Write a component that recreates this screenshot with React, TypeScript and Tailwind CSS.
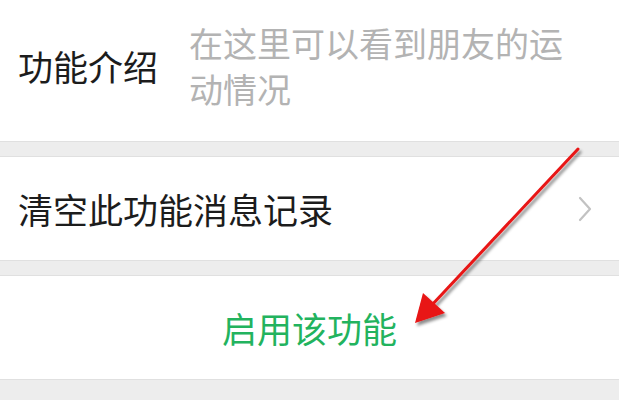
import React from "react";

const font = { fontFamily: '"Noto Sans CJK SC", "Noto Sans", sans-serif' };

export default function App() {
  return (
    <div className="relative w-[619px] h-[400px] overflow-hidden bg-[#ededed]" style={font}>
      <div className="flex h-[142px] items-center bg-white pb-[10px] border-b border-[#e0e0e0]">
        <div className="ml-[18px] w-[171px] text-[35px] leading-[46px] text-[#1c1c1c]">功能介绍</div>
        <div className="w-[390px] text-[34px] leading-[46px] text-[#b3b3b3]">在这里可以看到朋友的运动情况</div>
      </div>
      <div className="h-[14px]" />
      <div className="flex h-[105px] items-center justify-between bg-white border-y border-[#e0e0e0]">
        <div className="ml-[18px] text-[35px] leading-[46px] text-[#1c1c1c]">清空此功能消息记录</div>
        <svg width="16" height="28" viewBox="0 0 16 28" className="mr-[26px]">
          <path d="M3 3 L13 14 L3 25" fill="none" stroke="#c2c2c2" strokeWidth="2.2" strokeLinecap="round" strokeLinejoin="round" />
        </svg>
      </div>
      <div className="h-[14px]" />
      <div className="flex h-[105px] items-center justify-center bg-white border-y border-[#e0e0e0]">
        <div className="text-[35px] leading-[46px] text-[#22b35e]">启用该功能</div>
      </div>
      <svg className="absolute left-0 top-0" width="619" height="400" viewBox="0 0 619 400">
        <defs>
          <filter id="sh" x="-20%" y="-20%" width="140%" height="140%">
            <feDropShadow dx="2" dy="3" stdDeviation="1.8" floodColor="#000" floodOpacity="0.45" />
          </filter>
        </defs>
        <g filter="url(#sh)">
          <line x1="578" y1="149" x2="430" y2="307" stroke="#e81414" strokeWidth="3" strokeLinecap="round" />
          <polygon points="415,323 423,293 445,313" fill="#e81414" />
        </g>
      </svg>
    </div>
  );
}
